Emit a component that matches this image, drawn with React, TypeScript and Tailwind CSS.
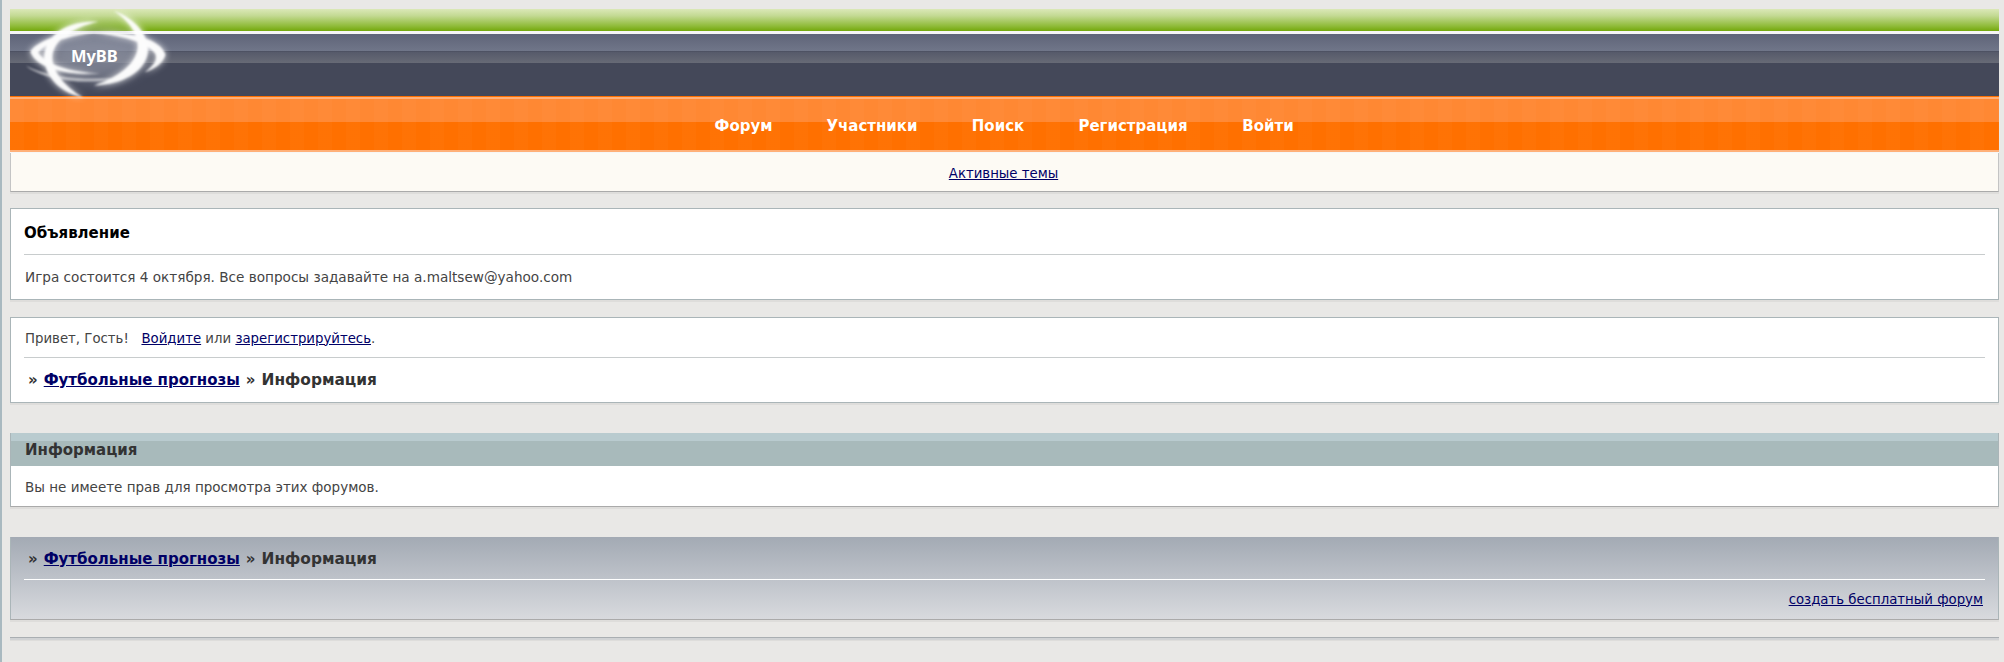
import React from "react";

const navItems = [
  { label: "Форум", className: "w-[57px]" },
  { label: "Участники", className: "w-[92px]" },
  { label: "Поиск", className: "w-[52px]" },
  { label: "Регистрация", className: "w-[110px]" },
  { label: "Войти", className: "w-[52px]" },
];

function Logo() {
  const rings = (
    <>
      <path d="M94 23C62 21 43 40 45 58C47 76 62 88 80 92C63 82 51 68 52 54C53 40 70 28 94 23Z" />
      <path d="M108 13C128 20 140 36 139 50C137 68 116 80 90 81C112 74 128 62 130 47C131 35 122 22 108 13Z" />
      <path d="M32 50C42 38 66 31 92 33C70 35 48 41 39 51C46 62 68 69 96 70C66 72 38 66 32 50Z" />
      <path d="M86 33C120 31 150 38 155 53C153 60 146 66 136 69C146 62 148 57 146 52C138 41 114 35 86 33Z" />
    </>
  );
  return (
    <svg
      className="absolute left-[-4px] top-[-7px]"
      width="176"
      height="101"
      viewBox="10 5 160 92"
      aria-hidden="true"
    >
      <defs>
        <filter id="glow" x="-20%" y="-20%" width="140%" height="140%">
          <feGaussianBlur stdDeviation="3.5" />
        </filter>
        <filter id="soft" x="-20%" y="-20%" width="140%" height="140%">
          <feGaussianBlur stdDeviation="1.1" />
        </filter>
        <filter id="haze" x="-30%" y="-30%" width="160%" height="160%">
          <feGaussianBlur stdDeviation="7" />
        </filter>
      </defs>
      <ellipse cx="92" cy="54" rx="44" ry="22" fill="#9094a4" opacity="0.7" filter="url(#haze)" />
      <g fill="#fff" filter="url(#glow)" opacity="0.9">
        {rings}
      </g>
      <g fill="#fff" filter="url(#soft)" opacity="0.92">
        {rings}
        <path d="M28 63C50 74 90 78 125 72C90 82 46 78 28 63Z" opacity="0.6" />
      </g>
      <text
        x="69"
        y="60"
        fill="#fff"
        fontSize="15"
        fontFamily="'Noto Sans', sans-serif"
        fontWeight="700"
      >
        MyBB
      </text>
    </svg>
  );
}

function Header() {
  return (
    <div className="relative">
      <div className="h-[22px] bg-[linear-gradient(#dbe8b8_0%,#c4da94_30%,#92bd3e_75%,#74a80c_100%)]" />
      <div className="h-[3px] bg-[#f6f6f6]" />
      <div className="h-[17px] bg-[linear-gradient(#5f6478,#707689)]" />
      <div className="h-px bg-[#4e5263]" />
      <div className="h-[11px] bg-[linear-gradient(#565a6a,#676a76)]" />
      <div className="h-[33px] bg-[#444859]" />
      <div className="h-px bg-[#ff7000]" />
      <div className="h-[2px] bg-[#ffb078]" />
      <div className="relative flex h-[51px] items-center justify-center gap-[54px] bg-[linear-gradient(#ff8833_0%,#ff8833_45%,#ff7000_45%,#ff7000_100%)] pt-[3px]">
        <div className="absolute inset-0 bg-[repeating-linear-gradient(90deg,rgba(255,255,255,0.02)_0,rgba(255,255,255,0.02)_14px,rgba(0,0,0,0)_14px,rgba(0,0,0,0)_28px)]" />
        {navItems.map((item) => (
          <a
            key={item.label}
            href="#"
            className={`relative flex justify-center text-[15px] font-bold whitespace-nowrap text-white ${item.className}`}
          >
            {item.label}
          </a>
        ))}
      </div>
      <div className="h-[2px] bg-[#ffb078]" />
      <div className="h-px bg-[#f6f6f6]" />
      <Logo />
    </div>
  );
}

function Breadcrumb() {
  return (
    <div className="flex gap-[6px] pl-[4px] text-[15px] font-bold text-[#333]">
      <span>»</span>
      <a href="#" className="text-[#000066] underline">Футбольные прогнозы</a>
      <span>»</span>
      <span className="text-[15.4px]">Информация</span>
    </div>
  );
}

export default function App() {
  return (
    <div className="h-[662px] overflow-hidden border-l-2 border-[#a9b9c0] bg-[#e9e8e6] pt-[9px] pr-[5px] pl-[8px] font-['DejaVu_Sans',sans-serif] text-[13.3px] text-[#444]">
      <Header />

      <div className="flex h-[39px] items-center justify-center border-x border-b border-x-[#c4c4c4] border-b-[#aaa] bg-[#fdfaf4] pt-[3px] pr-[2px] shadow-[0_2px_0_#dedddb]">
        <a href="#" className="text-[#000066] underline">Активные темы</a>
      </div>

      <div className="mt-[16px] border border-[#aab5b8] bg-white px-[13px] shadow-[0_2px_0_#dedddb]">
        <div className="flex h-[45px] items-center pt-[3px] text-[15px] font-bold text-black">Объявление</div>
        <div className="h-px bg-[#c8cccd]" />
        <div className="flex h-[44px] items-center pl-px text-[13.6px]">Игра состоится 4 октября. Все вопросы задавайте на a.maltsew@yahoo.com</div>
      </div>

      <div className="mt-[17px] border border-[#aab5b8] bg-white px-[13px] shadow-[0_2px_0_#dedddb]">
        <div className="flex h-[39px] items-center pt-[2px] pl-px whitespace-pre">
          Привет, Гость!{"   "}
          <a href="#" className="text-[#000066] underline">Войдите</a>
          {" или "}
          <a href="#" className="text-[#000066] underline">зарегистрируйтесь</a>.
        </div>
        <div className="h-px bg-[#c8cccd]" />
        <div className="flex h-[44px] items-center pt-[2px]">
          <Breadcrumb />
        </div>
      </div>

      <div className="mt-[30px] border-x border-b border-x-[#aab5b8] border-b-[#aaa] bg-white shadow-[0_2px_0_#dedddb]">
        <div className="h-[33px] bg-[linear-gradient(#b9cbcf_0px,#b9cbcf_8px,#a8babb_8px,#a8babb_33px)] pl-[14px] text-[15px] leading-[35px] font-bold text-[#333]">
          Информация
        </div>
        <div className="flex h-[40px] items-center pt-[2px] pl-[14px] text-[13.5px]">Вы не имеете прав для просмотра этих форумов.</div>
      </div>

      <div className="mt-[30px] border-x border-b border-x-[#aab5b8] border-b-[#aaa] bg-[linear-gradient(#a3aab4,#d8dade)] px-[13px] shadow-[0_2px_0_#dedddb]">
        <div className="flex h-[42px] items-center pt-[4px]">
          <Breadcrumb />
        </div>
        <div className="h-px bg-white" />
        <div className="flex h-[39px] items-center justify-end pr-[2px]">
          <a href="#" className="text-[#000066] underline">создать бесплатный форум</a>
        </div>
      </div>

      <div className="mt-[17px] h-[3px] border-t border-[#a9aeb2] bg-[#d0d2d4] shadow-[0_1px_0_#dedddb]" />
    </div>
  );
}
